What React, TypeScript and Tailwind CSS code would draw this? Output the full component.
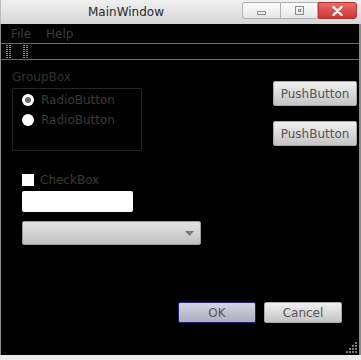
import React from 'react';

const FONT = { fontFamily: '"DejaVu Sans", "Liberation Sans", sans-serif' };

function Grip() {
  const dots = [];
  for (let y = 0; y < 14; y += 2) {
    dots.push(<rect key={'a' + y} x={0} y={y} width={2} height={1} fill="#8e8e8e" />);
    dots.push(<rect key={'b' + y} x={3} y={y} width={2} height={1} fill="#8e8e8e" />);
  }
  return (
    <svg width="5" height="14" className="block">
      {dots}
    </svg>
  );
}

function SizeGrip() {
  const pts: [number, number][] = [];
  for (let r = 0; r < 4; r++) {
    for (let c = 3 - r; c < 4; c++) pts.push([c * 3, r * 3]);
  }
  return (
    <svg width="12" height="12" className="absolute right-[1px] bottom-[1px]">
      {pts.map(([x, y], i) => (
        <rect key={i} x={x} y={y} width={2} height={2} fill="#7a7a7a" />
      ))}
    </svg>
  );
}

function Radio({ checked }: { checked?: boolean }) {
  return (
    <div className="flex items-center h-[12px]">
      <div className="w-[12px] h-[12px] rounded-full bg-white flex items-center justify-center">
        {checked && <div className="w-[6px] h-[6px] rounded-full bg-[#6a6a6a]" />}
      </div>
      <span className="ml-[7px] text-[12px] leading-[14px] text-[#3a3a3a]">RadioButton</span>
    </div>
  );
}

function PushButton({ label }: { label: string }) {
  return (
    <div className="w-[84px] h-[25px] rounded-[2px] border border-[#a8a8a8] bg-gradient-to-b from-[#f0f0f0] to-[#c4c4c4] flex items-center justify-center text-[12px] text-[#555]">
      {label}
    </div>
  );
}

export default function App() {
  return (
    <div className="w-[361px] h-[360px] bg-[#ececec] flex flex-col overflow-hidden" style={FONT}>
      {/* Title bar */}
      <div className="h-[24px] bg-gradient-to-b from-[#f0f0f0] to-[#d6d6d6] flex items-start relative border-l border-[#bdbdbd]">
        <div className="absolute left-0 right-[120px] top-0 h-[24px] flex items-center justify-center text-[12px] text-[#2a2a2a] pl-[10px]">
          MainWindow
        </div>
        <div className="ml-auto mr-[4px] mt-[2px] flex">
          <div className="w-[39px] h-[17px] border border-[#b0b0b0] rounded-l-[3px] bg-gradient-to-b from-[#fdfdfd] to-[#e6e6e6] flex items-center justify-center">
            <div className="w-[9px] h-[4px] border border-[#8a8a8a] rounded-[1px] mt-[4px]" />
          </div>
          <div className="w-[37px] h-[17px] border-y border-r border-[#b0b0b0] bg-gradient-to-b from-[#fdfdfd] to-[#e6e6e6] flex items-center justify-center">
            <div className="w-[9px] h-[9px] border border-[#8a8a8a] flex items-center justify-center">
              <div className="w-[3px] h-[3px] border border-[#8a8a8a]" />
            </div>
          </div>
          <div className="w-[39px] h-[17px] border border-[#b83030] rounded-r-[3px] bg-gradient-to-b from-[#ec6a6a] to-[#cc3434] flex items-center justify-center">
            <svg width="11" height="10" viewBox="0 0 11 10">
              <path d="M1.5 1 L9.5 9 M9.5 1 L1.5 9" stroke="#fff" strokeWidth="2.4" strokeLinecap="round" />
            </svg>
          </div>
        </div>
      </div>

      {/* Window body */}
      <div className="h-[331px] bg-black border-l border-r-2 border-l-[#8a8a8a] border-r-[#8a8a8a] flex flex-col relative">
        {/* Menu bar */}
        <div className="h-[19px] flex items-center text-[12px] text-[#3c3c3c] pl-[10px] gap-[15px]">
          <span>File</span>
          <span>Help</span>
        </div>
        {/* Tool bar */}
        <div className="h-[17px] border-y border-[#6a6a6a] flex items-center pl-[5px] gap-[12px]">
          <Grip />
          <Grip />
        </div>

        {/* Central widget */}
        <div className="flex-1 flex flex-col">
          <div className="flex">
            <div className="pl-[11px] flex flex-col">
              <div className="mt-[10px] text-[12px] leading-[14px] text-[#333]">GroupBox</div>
              <div className="mt-[4px] w-[130px] h-[63px] border border-[#262626] rounded-[2px] pt-[5px] pl-[9px] flex flex-col gap-[8px]">
                <Radio checked />
                <Radio />
              </div>
              <div className="mt-[23px] ml-[10px] flex items-center h-[12px]">
                <div className="w-[12px] h-[12px] bg-white" />
                <span className="ml-[6px] text-[12px] leading-[14px] text-[#3a3a3a]">CheckBox</span>
              </div>
              <div className="mt-[5px] ml-[10px] w-[111px] h-[21px] bg-white rounded-[2px]" />
              <div className="mt-[9px] ml-[10px] w-[179px] h-[24px] rounded-[2px] border border-[#9c9c9c] bg-gradient-to-b from-[#e4e4e4] to-[#c0c0c0] flex items-center justify-end pr-[6px]">
                <svg width="9" height="5" viewBox="0 0 9 5">
                  <path d="M0 0 L9 0 L4.5 5 Z" fill="#7a7a7a" />
                </svg>
              </div>
            </div>
            <div className="ml-auto mr-[2px] mt-[21px] flex flex-col gap-[15px]">
              <PushButton label="PushButton" />
              <PushButton label="PushButton" />
            </div>
          </div>

          <div className="mt-[57px] flex justify-end gap-[8px] pr-[17px]">
            <div className="w-[78px] h-[21px] rounded-[2px] border border-[#23237a] bg-gradient-to-b from-[#d4d4e2] to-[#adadbd] flex items-center justify-center text-[12px] text-[#555]">
              OK
            </div>
            <div className="w-[78px] h-[21px] rounded-[2px] border border-[#a8a8a8] bg-gradient-to-b from-[#f0f0f0] to-[#c4c4c4] flex items-center justify-center text-[12px] text-[#555]">
              Cancel
            </div>
          </div>
        </div>
        <SizeGrip />
      </div>
      <div className="flex-1 bg-[#ececec]" />
    </div>
  );
}
